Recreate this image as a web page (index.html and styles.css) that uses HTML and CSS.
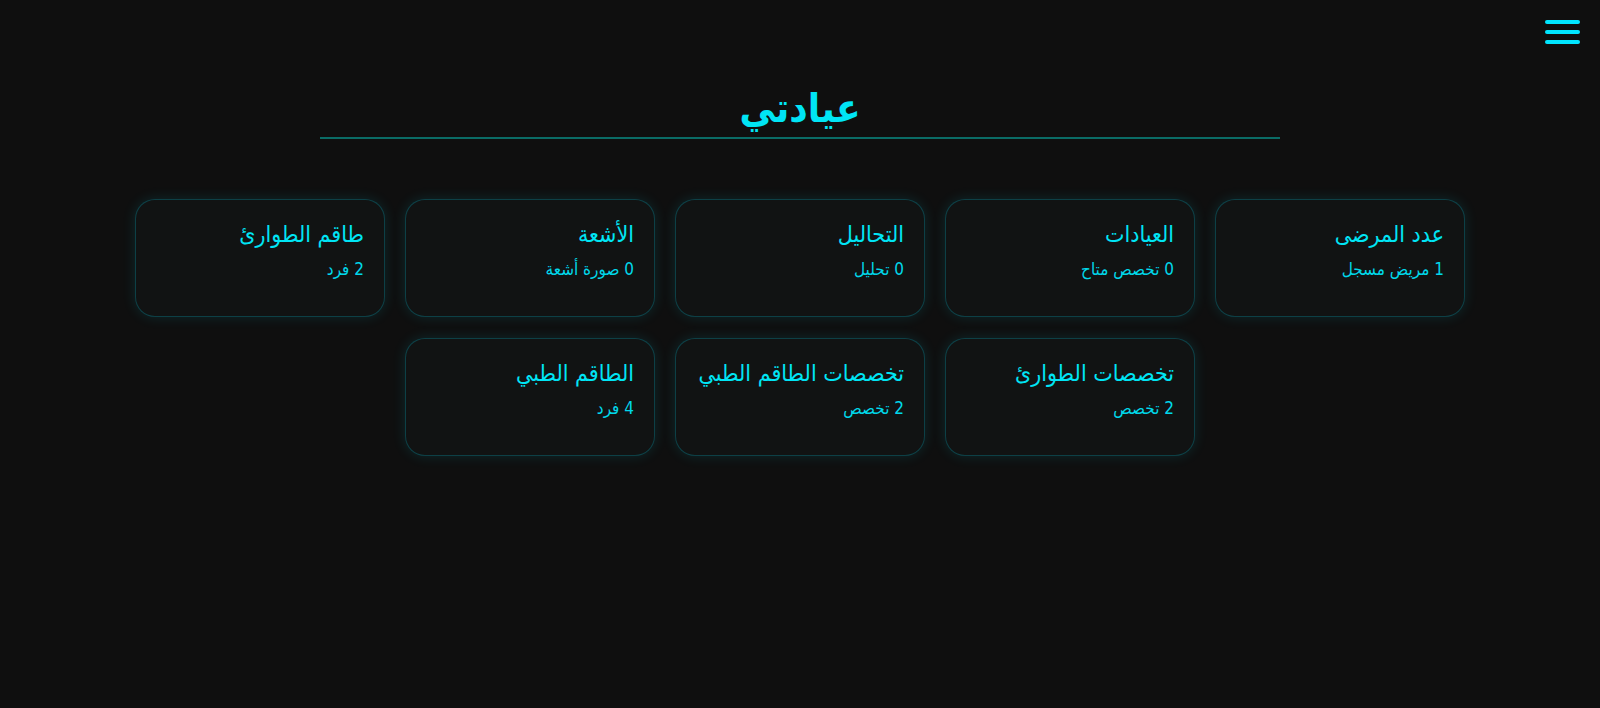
FILE: index.html
```html
<!DOCTYPE html>
<html lang="ar" dir="rtl">
<head>
<meta charset="utf-8">
<title>عيادتي</title>
<link rel="stylesheet" href="styles.css">
</head>
<body>
<header class="topbar">
  <button class="menu-btn" aria-label="menu">
    <span></span><span></span><span></span>
  </button>
</header>
<main class="content">
  <h1 class="page-title">عيادتي</h1>
  <section class="cards">
    <div class="card"><h3>عدد المرضى</h3><p>1 مريض مسجل</p></div>
    <div class="card"><h3>العيادات</h3><p>0 تخصص متاح</p></div>
    <div class="card"><h3>التحاليل</h3><p>0 تحليل</p></div>
    <div class="card"><h3>الأشعة</h3><p>0 صورة أشعة</p></div>
    <div class="card"><h3>طاقم الطوارئ</h3><p>2 فرد</p></div>
    <div class="card"><h3>تخصصات الطوارئ</h3><p>2 تخصص</p></div>
    <div class="card"><h3>تخصصات الطاقم الطبي</h3><p>2 تخصص</p></div>
    <div class="card"><h3>الطاقم الطبي</h3><p>4 فرد</p></div>
  </section>
</main>
</body>
</html>
```

FILE: styles.css
```css
html, body {
  margin: 0;
  padding: 0;
}
body {
  background: #0f0f0f;
  color: #00e5ff;
  font-family: "DejaVu Sans Condensed", "DejaVu Sans", sans-serif;
  font-stretch: condensed;
  min-height: 708px;
}
.topbar {
  display: flex;
  justify-content: flex-start;
  padding: 20px 20px 0 20px;
  height: 29px;
}
.menu-btn {
  background: none;
  border: 0;
  padding: 0;
  width: 35px;
  height: 24px;
  display: flex;
  flex-direction: column;
  gap: 6px;
  cursor: pointer;
}
.menu-btn span {
  display: block;
  height: 4px;
  width: 35px;
  border-radius: 2px;
  background: #00e5ff;
}
.content {
  display: flex;
  flex-direction: column;
  align-items: center;
}
.page-title {
  width: 960px;
  margin: 35px 0 0 0;
  padding-bottom: 5px;
  text-align: center;
  font-size: 40px;
  font-weight: bold;
  line-height: 48px;
  border-bottom: 2px solid #0a6c66;
  color: #00e5f5;
}
.cards {
  display: flex;
  flex-wrap: wrap;
  justify-content: center;
  column-gap: 20px;
  row-gap: 21px;
  width: 1330px;
  margin-top: 60px;
}
.card {
  box-sizing: border-box;
  width: 250px;
  height: 118px;
  padding: 18px 20px;
  border: 1px solid rgba(0, 229, 255, 0.22);
  border-radius: 20px;
  background: #111313;
  box-shadow: 0 0 14px rgba(0, 229, 255, 0.12);
}
.card h3 {
  margin: 0;
  font-size: 23px;
  font-weight: normal;
  line-height: 1.4;
  white-space: nowrap;
  color: #00e5f5;
}
.card p {
  margin: 9px 0 0 0;
  font-size: 17px;
  color: #00d8ea;
}
```
